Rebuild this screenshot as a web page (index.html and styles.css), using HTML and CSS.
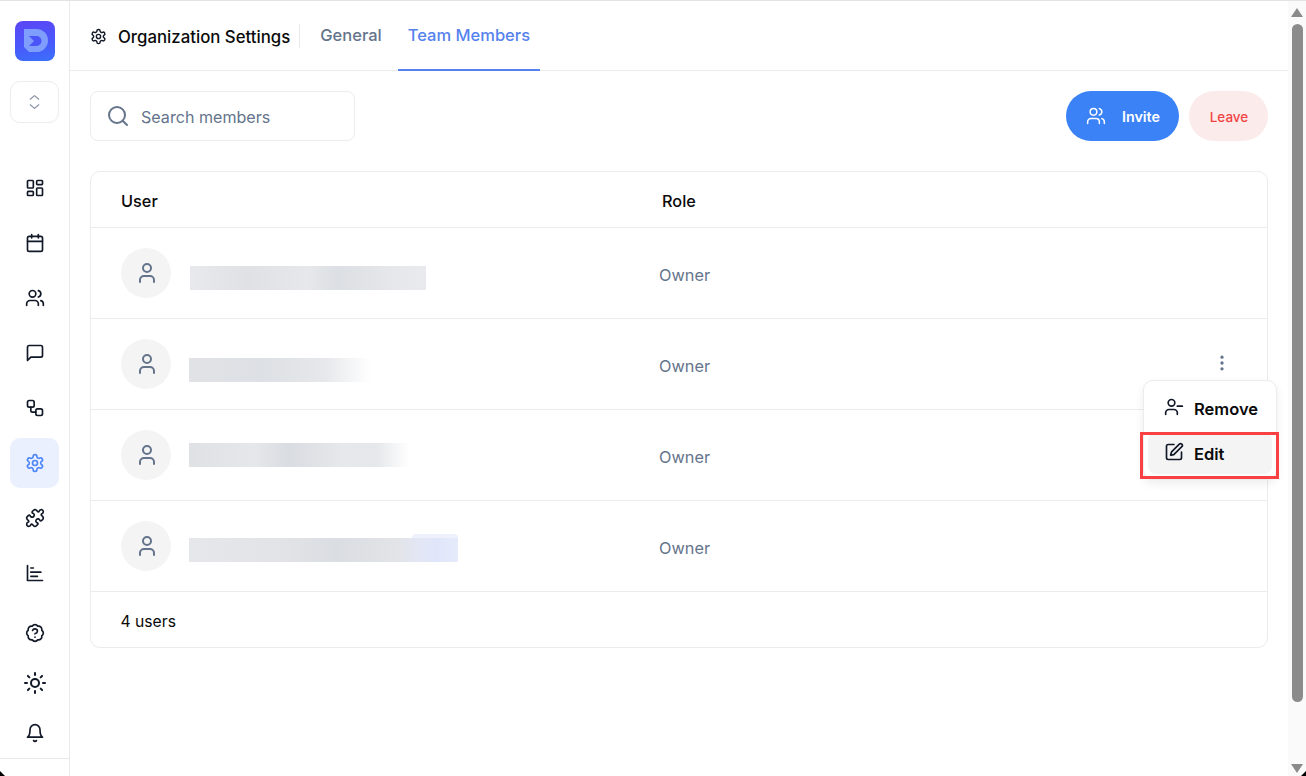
FILE: index.html
```html
<!DOCTYPE html>
<html lang="en">
<head>
<meta charset="utf-8">
<title>Organization Settings</title>
<link rel="stylesheet" href="styles.css">
</head>
<body>
<svg class="defs" aria-hidden="true">
  <symbol id="i-gear" viewBox="0 0 24 24"><path d="M12.22 2h-.44a2 2 0 0 0-2 2v.18a2 2 0 0 1-1 1.73l-.43.25a2 2 0 0 1-2 0l-.15-.08a2 2 0 0 0-2.73.73l-.22.38a2 2 0 0 0 .73 2.73l.15.1a2 2 0 0 1 1 1.72v.51a2 2 0 0 1-1 1.74l-.15.09a2 2 0 0 0-.73 2.73l.22.38a2 2 0 0 0 2.73.73l.15-.08a2 2 0 0 1 2 0l.43.25a2 2 0 0 1 1 1.73V20a2 2 0 0 0 2 2h.44a2 2 0 0 0 2-2v-.18a2 2 0 0 1 1-1.73l.43-.25a2 2 0 0 1 2 0l.15.08a2 2 0 0 0 2.73-.73l.22-.39a2 2 0 0 0-.73-2.73l-.15-.08a2 2 0 0 1-1-1.74v-.5a2 2 0 0 1 1-1.74l.15-.09a2 2 0 0 0 .73-2.73l-.22-.38a2 2 0 0 0-2.73-.73l-.15.08a2 2 0 0 1-2 0l-.43-.25a2 2 0 0 1-1-1.73V4a2 2 0 0 0-2-2z"/><circle cx="12" cy="12" r="3"/></symbol>
  <symbol id="i-users" viewBox="0 0 24 24"><path d="M16 21v-2a4 4 0 0 0-4-4H6a4 4 0 0 0-4 4v2"/><circle cx="9" cy="7" r="4"/><path d="M22 21v-2a4 4 0 0 0-3-3.87"/><path d="M16 3.13a4 4 0 0 1 0 7.75"/></symbol>
  <symbol id="i-user" viewBox="0 0 24 24"><path d="M19 21v-2a4 4 0 0 0-4-4H9a4 4 0 0 0-4 4v2"/><circle cx="12" cy="7" r="4"/></symbol>
</svg>

<div class="shell">
  <aside class="sidebar">
    <div class="logo">
      <svg viewBox="0 0 40 40" width="40" height="40"><path class="logo-d" d="M9 8h12.5a11.5 11.5 0 0 1 0 23H14l-5-5z"/><path class="logo-hole" d="M14 15h7.5a5 5 0 0 1 0 10H14l5-5z"/></svg>
    </div>
    <button class="switcher" aria-label="Switch organization">
      <svg class="ic ic-switch" viewBox="0 0 24 24"><path d="m6 8 6-5 6 5"/><path d="m6 16 6 5 6-5"/></svg>
    </button>
    <nav class="nav-main">
      <a class="nav-item"><svg class="ic" viewBox="0 0 24 24"><rect x="3" y="3" width="7" height="9" rx="1"/><rect x="14" y="3" width="7" height="5" rx="1"/><rect x="14" y="12" width="7" height="9" rx="1"/><rect x="3" y="16" width="7" height="5" rx="1"/></svg></a>
      <a class="nav-item"><svg class="ic" viewBox="0 0 24 24"><path d="M8 2v4"/><path d="M16 2v4"/><rect x="3" y="4" width="18" height="18" rx="2"/><path d="M3 10h18"/></svg></a>
      <a class="nav-item"><svg class="ic"><use href="#i-users"/></svg></a>
      <a class="nav-item"><svg class="ic" viewBox="0 0 24 24"><path d="M21 15a2 2 0 0 1-2 2H7l-4 4V5a2 2 0 0 1 2-2h14a2 2 0 0 1 2 2z"/></svg></a>
      <a class="nav-item"><svg class="ic" viewBox="0 0 24 24"><rect x="3" y="3" width="8" height="8" rx="2"/><path d="M7 11v4a2 2 0 0 0 2 2h4"/><rect x="13" y="13" width="8" height="8" rx="2"/></svg></a>
      <a class="nav-item active"><svg class="ic"><use href="#i-gear"/></svg></a>
      <a class="nav-item"><svg class="ic" viewBox="0 0 24 24"><path d="M19.439 7.85c-.049.322.059.648.289.878l1.568 1.568c.47.47.706 1.087.706 1.704s-.235 1.233-.706 1.704l-1.611 1.611a.98.98 0 0 1-.837.276c-.47-.07-.802-.48-.968-.925a2.501 2.501 0 1 0-3.214 3.214c.446.166.855.497.925.968a.979.979 0 0 1-.276.837l-1.61 1.61a2.404 2.404 0 0 1-1.705.707 2.402 2.402 0 0 1-1.704-.706l-1.568-1.568a1.026 1.026 0 0 0-.877-.29c-.493.074-.84.504-1.02.968a2.5 2.5 0 1 1-3.237-3.237c.464-.18.894-.527.967-1.02a1.026 1.026 0 0 0-.289-.877l-1.568-1.568A2.402 2.402 0 0 1 1.998 12c0-.617.236-1.234.706-1.704L4.23 8.77c.24-.24.581-.353.917-.303.515.077.877.528 1.073 1.01a2.5 2.5 0 1 0 3.259-3.259c-.482-.196-.933-.558-1.01-1.073-.05-.336.062-.676.303-.917l1.525-1.525A2.402 2.402 0 0 1 12 1.998c.617 0 1.234.236 1.704.706l1.568 1.568c.23.23.556.338.877.29.493-.074.84-.504 1.02-.968a2.5 2.5 0 1 1 3.237 3.237c-.464.18-.894.527-.967 1.02Z"/></svg></a>
      <a class="nav-item"><svg class="ic" viewBox="0 0 24 24"><path d="M3 3v18h18"/><path d="M7 16h8"/><path d="M7 11h12"/><path d="M7 6h3"/></svg></a>
    </nav>
    <nav class="nav-foot">
      <a class="nav-item"><svg class="ic" viewBox="0 0 24 24"><path d="M3.85 8.62a4 4 0 0 1 4.78-4.77 4 4 0 0 1 6.74 0 4 4 0 0 1 4.78 4.78 4 4 0 0 1 0 6.74 4 4 0 0 1-4.77 4.78 4 4 0 0 1-6.75 0 4 4 0 0 1-4.78-4.77 4 4 0 0 1 0-6.76Z"/><path d="M9.09 9a3 3 0 0 1 5.83 1c0 2-3 3-3 3"/><path d="M12 17h.01"/></svg></a>
      <a class="nav-item"><svg class="ic ic-sun" viewBox="0 0 24 24"><circle cx="12" cy="12" r="4"/><path d="M12 2v2"/><path d="M12 20v2"/><path d="m4.93 4.93 1.41 1.41"/><path d="m17.66 17.66 1.41 1.41"/><path d="M2 12h2"/><path d="M20 12h2"/><path d="m6.34 17.66-1.41 1.41"/><path d="m19.07 4.93-1.41 1.41"/></svg></a>
      <a class="nav-item"><svg class="ic" viewBox="0 0 24 24"><path d="M6 8a6 6 0 0 1 12 0c0 7 3 9 3 9H3s3-2 3-9"/><path d="M10.3 21a1.94 1.94 0 0 0 3.4 0"/></svg></a>
    </nav>
    <div class="side-end"></div>
    <i class="corner corner-left"></i>
  </aside>

  <main class="main">
    <header class="tabs">
      <div class="page-title">
        <svg class="ic ic-title"><use href="#i-gear"/></svg>
        <span>Organization Settings</span>
      </div>
      <a class="tab">General</a>
      <a class="tab tab-on">Team Members</a>
    </header>

    <section class="content">
      <div class="toolbar">
        <label class="search">
          <svg class="ic ic-search" viewBox="0 0 24 24"><circle cx="11" cy="11" r="8"/><path d="m21 21-4.3-4.3"/></svg>
          <span>Search members</span>
        </label>
        <div class="actions">
          <button class="btn btn-invite"><svg class="ic ic-invite"><use href="#i-users"/></svg><span>Invite</span></button>
          <button class="btn btn-leave">Leave</button>
        </div>
      </div>

      <div class="table">
        <div class="row row-head"><div class="th">User</div><div class="th th-role">Role</div></div>
        <div class="row">
          <div class="user"><div class="avatar"><svg class="ic ic-user"><use href="#i-user"/></svg></div><div class="blur blur-1"></div></div>
          <div class="role">Owner</div>
        </div>
        <div class="row">
          <div class="user"><div class="avatar"><svg class="ic ic-user"><use href="#i-user"/></svg></div><div class="blur blur-2"></div></div>
          <div class="role">Owner</div>
          <svg class="ic ic-more" viewBox="0 0 24 24"><circle cx="12" cy="5" r="1"/><circle cx="12" cy="12" r="1"/><circle cx="12" cy="19" r="1"/></svg>
        </div>
        <div class="row">
          <div class="user"><div class="avatar"><svg class="ic ic-user"><use href="#i-user"/></svg></div><div class="blur blur-3"></div></div>
          <div class="role">Owner</div>
        </div>
        <div class="row">
          <div class="user"><div class="avatar"><svg class="ic ic-user"><use href="#i-user"/></svg></div><div class="blur blur-4"><i class="blur-tag"></i></div></div>
          <div class="role">Owner</div>
        </div>
        <div class="table-foot">4 users</div>

        <div class="menu">
          <a class="menu-item"><svg class="ic ic-menu" viewBox="0 0 24 24"><path d="M16 21v-2a4 4 0 0 0-4-4H6a4 4 0 0 0-4 4v2"/><circle cx="9" cy="7" r="4"/><path d="M22 11h-6"/></svg><span>Remove</span></a>
          <a class="menu-item menu-hover"><svg class="ic ic-menu" viewBox="0 0 24 24"><path d="M12 3H5a2 2 0 0 0-2 2v14a2 2 0 0 0 2 2h14a2 2 0 0 0 2-2v-7"/><path d="M18.375 2.625a1 1 0 0 1 3 3l-9.013 9.014a2 2 0 0 1-.853.505l-2.873.84a.5.5 0 0 1-.62-.62l.84-2.873a2 2 0 0 1 .506-.852z"/></svg><span>Edit</span></a>
          <div class="callout"></div>
        </div>
      </div>
    </section>
  </main>

  <div class="scrollbar">
    <i class="arrow arrow-up"></i>
    <i class="thumb"></i>
    <i class="arrow arrow-down"></i>
    <i class="corner corner-right"></i>
  </div>
</div>
</body>
</html>
```

FILE: styles.css
```css
* { box-sizing: border-box; }
html, body { margin: 0; height: 100%; overflow: hidden; background: #fff; }
body { font-family: Inter, "Noto Sans", sans-serif; color: #0a0a0a; }
.defs { display: none; }
a { display: flex; }
button { font: inherit; border: 0; padding: 0; }

.ic { width: 20px; height: 20px; fill: none; stroke: #111827; stroke-width: 2; stroke-linecap: round; stroke-linejoin: round; flex: none; }

.shell { display: flex; height: 776px; border-top: 1px solid #e3e3e3; }

/* Sidebar */
.sidebar { width: 70px; flex: none; border-right: 1px solid #e9e9e9; display: flex; flex-direction: column; align-items: center; position: relative; }
.logo { width: 40px; height: 40px; margin-top: 20px; border-radius: 8px; overflow: hidden; background: linear-gradient(170deg, #5b45f5 0%, #4a58fb 55%, #3a70fb 100%); }
.logo-d { fill: #7f9dfc; }
.logo-hole { fill: #4a54f8; }
.switcher { width: 49px; height: 42px; margin-top: 20px; background: #fff; border: 1px solid #ececec; border-radius: 10px; display: flex; align-items: center; justify-content: center; }
.ic-switch { width: 17px; height: 20px; stroke: #8a94a6; stroke-width: 1.8; }
.nav-main { margin-top: 40px; display: flex; flex-direction: column; gap: 5px; }
.nav-foot { margin-top: 10px; display: flex; flex-direction: column; }
.nav-item { width: 49px; height: 50px; border-radius: 10px; align-items: center; justify-content: center; }
.nav-item.active { background: #eaf0fd; }
.nav-item.active .ic { stroke: #4f86f7; }
.ic-sun { width: 24px; height: 24px; }
.side-end { position: absolute; left: 0; right: 0; bottom: 17px; border-top: 1px solid #e9e9e9; }
.corner { position: absolute; width: 5px; height: 5px; bottom: 0; background: #000; }
.corner-left { left: 0; clip-path: polygon(0 0, 100% 100%, 0 100%); }
.corner-right { right: 0; clip-path: polygon(100% 0, 100% 100%, 0 100%); }

/* Main column */
.main { width: 1218px; flex: none; display: flex; flex-direction: column; }
.tabs { height: 70px; flex: none; border-bottom: 1px solid #ececec; display: flex; align-items: stretch; padding-left: 20px; }
.page-title { display: flex; align-items: center; gap: 11px; font-size: 16.8px; font-weight: 500; color: #0a0a0a; height: 24px; margin-top: 23px; padding-right: 9px; border-right: 1px solid #e9e9e9; }
.page-title span { position: relative; top: 1px; }
.ic-title { width: 17px; height: 17px; }
.tab { padding: 0 10px; align-items: center; font-size: 16.5px; font-weight: 500; color: #64748b; border-bottom: 2px solid transparent; margin-bottom: -1px; margin-left: 10px; }
.tab-on { color: #5582ee; border-bottom-color: #5582ee; margin-left: 6px; }

.content { padding: 20px 20px 0; }
.toolbar { display: flex; justify-content: space-between; }
.search { width: 265px; height: 50px; border: 1px solid #ececec; border-radius: 8px; display: flex; align-items: center; gap: 11px; padding: 2px 0 0 15px; font-size: 16.1px; color: #64748b; }
.ic-search { width: 24px; height: 24px; stroke: #64748b; position: relative; top: -1px; }
.actions { display: flex; gap: 10px; }
.btn { height: 50px; border-radius: 25px; display: flex; align-items: center; justify-content: center; font-size: 14px; font-weight: 600; }
.btn-invite { width: 113px; background: #3b82f6; color: #fff; gap: 16px; padding-left: 1px; }
.btn-invite span { font-size: 14.3px; }
.ic-invite { stroke: #fff; stroke-width: 1.8; }
.btn-leave { width: 79px; background: #fcebeb; color: #ef4444; font-size: 13.5px; font-weight: 500; padding: 1px 0 0 1px; }

/* Table */
.table { margin-top: 30px; border: 1px solid #ececec; border-radius: 10px; position: relative; }
.row { display: flex; align-items: center; height: 91px; padding-left: 30px; border-bottom: 1px solid #ececec; position: relative; }
.row-head { height: 56px; padding-top: 2px; }
.th { width: 541px; font-size: 16.3px; font-weight: 500; color: #0a0a0a; }
.th-role { width: auto; }
.user { width: 538px; display: flex; align-items: center; gap: 18px; }
.avatar { width: 50px; height: 50px; border-radius: 50%; background: #f4f4f5; display: flex; align-items: center; justify-content: center; flex: none; }
.ic-user { width: 24px; height: 24px; stroke: #64748b; stroke-width: 2; margin-left: 1px; }
.role { font-size: 16.3px; color: #64748b; padding-top: 4px; }
.ic-more { position: absolute; right: 35px; top: 34px; width: 20px; height: 20px; stroke: #64748b; }
.table-foot { height: 55px; padding: 4px 0 0 29.5px; display: flex; align-items: center; font-size: 15.7px; color: #0a0a0a; }

.blur { height: 24px; position: relative; }
.blur-1 { width: 236px; margin: 10px 0 0 1px; background: linear-gradient(90deg, #e8e9ec, #dfe1e5 25%, #e6e8eb 50%, #dcdfe3 62%, #e5e7ea 85%, #e8eaed); }
.blur-2 { width: 182px; margin-top: 12px; background: linear-gradient(90deg, #e0e2e6, #dde0e4 40%, #e6e8eb 75%, #ffffff 100%); }
.blur-3 { width: 220px; background: linear-gradient(90deg, #dfe1e5, #e5e7ea 30%, #d9dce1 45%, #e6e8eb 70%, #e5e7ea 85%, #ffffff 100%); }
.blur-4 { width: 269px; margin-top: 7px; background: linear-gradient(90deg, #e5e7ea, #e1e3e7 35%, #dadde1 55%, #e2e4e8 78%, #e3e6f4 85%, #e0e6fa 92%, #e6ebfb); }
.blur-tag { position: absolute; left: 223px; right: 0; top: -4px; height: 4px; background: #eef1fc; border-radius: 5px 5px 0 0; }

/* Menu */
.menu { position: absolute; left: 1052px; top: 208px; width: 134px; height: 100px; background: #fff; border: 1px solid #ececec; border-radius: 10px; box-shadow: 0 4px 10px rgba(0,0,0,.07); padding: 5px 4px; display: flex; flex-direction: column; }
.menu-item { height: 45px; align-items: center; gap: 10px; padding: 2px 0 0 16px; font-size: 16.5px; font-weight: 600; border-radius: 8px; color: #0a0a0a; }
.menu-hover { background: #f4f4f5; height: 43px; margin-top: 2px; }
.ic-menu { width: 20px; height: 20px; position: relative; top: -2px; }
.callout { position: absolute; left: -4px; right: -3px; top: 51px; height: 47px; border: 3px solid #f94144; pointer-events: none; }

/* Scrollbar */
.scrollbar { width: 18px; flex: none; background: #fafafa; display: flex; flex-direction: column; align-items: center; position: relative; }
.arrow { width: 0; height: 0; border-left: 6px solid transparent; border-right: 6px solid transparent; flex: none; }
.arrow-up { border-bottom: 9px solid #8b8b8b; margin-top: 7px; }
.arrow-down { border-top: 9px solid #8b8b8b; margin-top: 62px; }
.thumb { width: 11px; height: 678px; margin-top: 7px; border-radius: 6px; background: #8b8b8b; flex: none; }
```
